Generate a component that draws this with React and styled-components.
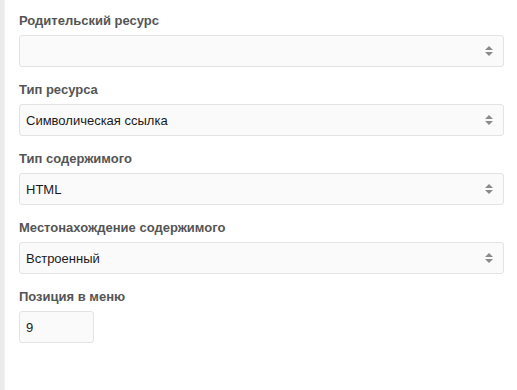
import React from 'react';
import styled, { createGlobalStyle } from 'styled-components';

const GlobalStyle = createGlobalStyle`
	html, body {
		margin: 0;
		padding: 0;
		background: #fff;
	}
	body {
		font-family: "Liberation Sans", Arial, sans-serif;
	}
`;

const Page = styled.div`
	display: flex;
	width: 517px;
	height: 390px;
	background: #fff;
`;

const SideStrip = styled.div`
	width: 4px;
	flex: none;
	background: #ebebeb;
	border-right: 1px solid #f3f3f3;
`;

const Form = styled.div`
	flex: 1;
	padding: 11px 13px 0 14px;
	display: flex;
	flex-direction: column;
`;

const Group = styled.div`
	margin-bottom: 13px;
`;

const Label = styled.div`
	font-size: 13px;
	font-weight: bold;
	line-height: 20px;
	color: #555;
	margin-bottom: 4px;
`;

const Field = styled.div`
	position: relative;
	box-sizing: border-box;
	width: ${ ( { $width } ) => $width || '100%' };
	height: 32px;
	padding: 0 24px 0 6px;
	display: flex;
	align-items: center;
	background: #fafafa;
	border: 1px solid #e3e3e3;
	border-radius: 3px;
	font-size: 13px;
	color: #1a1a1a;
`;

const Arrows = styled.svg`
	position: absolute;
	right: 10px;
	top: 50%;
	margin-top: -5px;
`;

function SelectArrows() {
	return (
		<Arrows width="8" height="10" viewBox="0 0 8 10">
			<path d="M4 0 L8 4 L0 4 Z" fill="#8a8a8a" />
			<path d="M0 6 L8 6 L4 10 Z" fill="#8a8a8a" />
		</Arrows>
	);
}

const fields = [
	{ label: 'Родительский ресурс', value: '' },
	{ label: 'Тип ресурса', value: 'Символическая ссылка' },
	{ label: 'Тип содержимого', value: 'HTML' },
	{ label: 'Местонахождение содержимого', value: 'Встроенный' },
];

export default function App() {
	return (
		<>
			<GlobalStyle />
			<Page>
				<SideStrip />
				<Form>
					{ fields.map( ( f ) => (
						<Group key={ f.label }>
							<Label>{ f.label }</Label>
							<Field>
								{ f.value }
								<SelectArrows />
							</Field>
						</Group>
					) ) }
					<Group>
						<Label>Позиция в меню</Label>
						<Field $width="75px">9</Field>
					</Group>
				</Form>
			</Page>
		</>
	);
}
